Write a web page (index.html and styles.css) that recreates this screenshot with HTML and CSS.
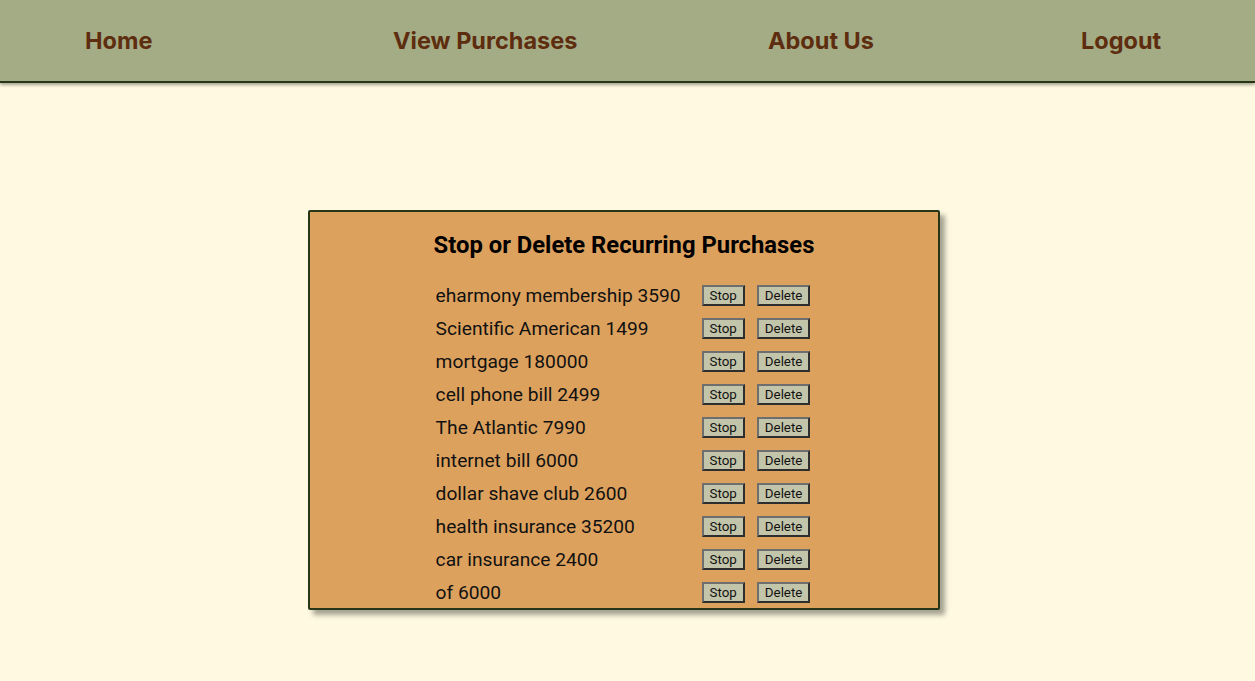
FILE: index.html
```html
<!DOCTYPE html>
<html>
<head>
<meta charset="utf-8">
<link rel="stylesheet" href="styles.css">
</head>
<body>
<header class="nav">
  <a class="nav-link" href="#">Home</a>
  <a class="nav-link" href="#">View Purchases</a>
  <a class="nav-link" href="#">About Us</a>
  <a class="nav-link" href="#">Logout</a>
</header>
<main class="main">
  <section class="card">
    <h2 class="title">Stop or Delete Recurring Purchases</h2>
    <div class="list">
      <span class="item">eharmony membership 3590</span><button class="btn">Stop</button><button class="btn">Delete</button>
      <span class="item">Scientific American 1499</span><button class="btn">Stop</button><button class="btn">Delete</button>
      <span class="item">mortgage 180000</span><button class="btn">Stop</button><button class="btn">Delete</button>
      <span class="item">cell phone bill 2499</span><button class="btn">Stop</button><button class="btn">Delete</button>
      <span class="item">The Atlantic 7990</span><button class="btn">Stop</button><button class="btn">Delete</button>
      <span class="item">internet bill 6000</span><button class="btn">Stop</button><button class="btn">Delete</button>
      <span class="item">dollar shave club 2600</span><button class="btn">Stop</button><button class="btn">Delete</button>
      <span class="item">health insurance 35200</span><button class="btn">Stop</button><button class="btn">Delete</button>
      <span class="item">car insurance 2400</span><button class="btn">Stop</button><button class="btn">Delete</button>
      <span class="item">of 6000</span><button class="btn">Stop</button><button class="btn">Delete</button>
    </div>
  </section>
</main>
</body>
</html>
```
FILE: styles.css
```css
html, body {
  margin: 0;
  padding: 0;
}
body {
  background: #fef9e0;
  font-family: Roboto, "Liberation Sans", sans-serif;
  min-height: 681px;
}
.nav {
  height: 81px;
  background: #a3ac85;
  border-bottom: 2px solid #283618;
  box-shadow: 0 2px 3px rgba(0, 0, 0, 0.35);
  display: grid;
  grid-template-columns: 308px 375px 313px 1fr;
  align-items: center;
  padding-left: 85px;
  box-sizing: content-box;
}
.nav-link {
  font-family: Inter, "Liberation Sans", sans-serif;
  font-weight: bold;
  font-size: 23.5px;
  color: #5e2d0f;
  text-decoration: none;
  line-height: 28px;
  padding-top: 1px;
}
.main {
  display: flex;
  justify-content: center;
  padding-top: 127px;
  padding-right: 7px;
}
.card {
  width: 632px;
  height: 400px;
  background: #dda15e;
  border: 2px solid #283618;
  border-radius: 2px;
  box-shadow: 5px 5px 5px rgba(0, 0, 0, 0.35);
  display: flex;
  flex-direction: column;
  align-items: center;
  padding-top: 19px;
  box-sizing: border-box;
}
.title {
  margin: 0 0 20px 0;
  font-size: 23.8px;
  line-height: 28px;
  font-weight: bold;
  color: #000;
}
.list {
  display: grid;
  grid-template-columns: auto auto auto;
  grid-auto-rows: 33px;
  align-items: center;
  column-gap: 12px;
  padding-right: 2px;
}
.item {
  font-size: 19.2px;
  color: #111;
  padding-right: 9px;
}
.btn {
  font-family: Roboto, "Liberation Sans", sans-serif;
  font-size: 13.333px;
  color: #111;
  background: #c3c5aa;
  border-style: solid;
  border-width: 2px;
  border-color: #6e6e6e #2e2e2e #2e2e2e #6e6e6e;
  padding: 1px 6px;
  line-height: 15px;
  height: 21px;
  justify-self: start;
}
```
